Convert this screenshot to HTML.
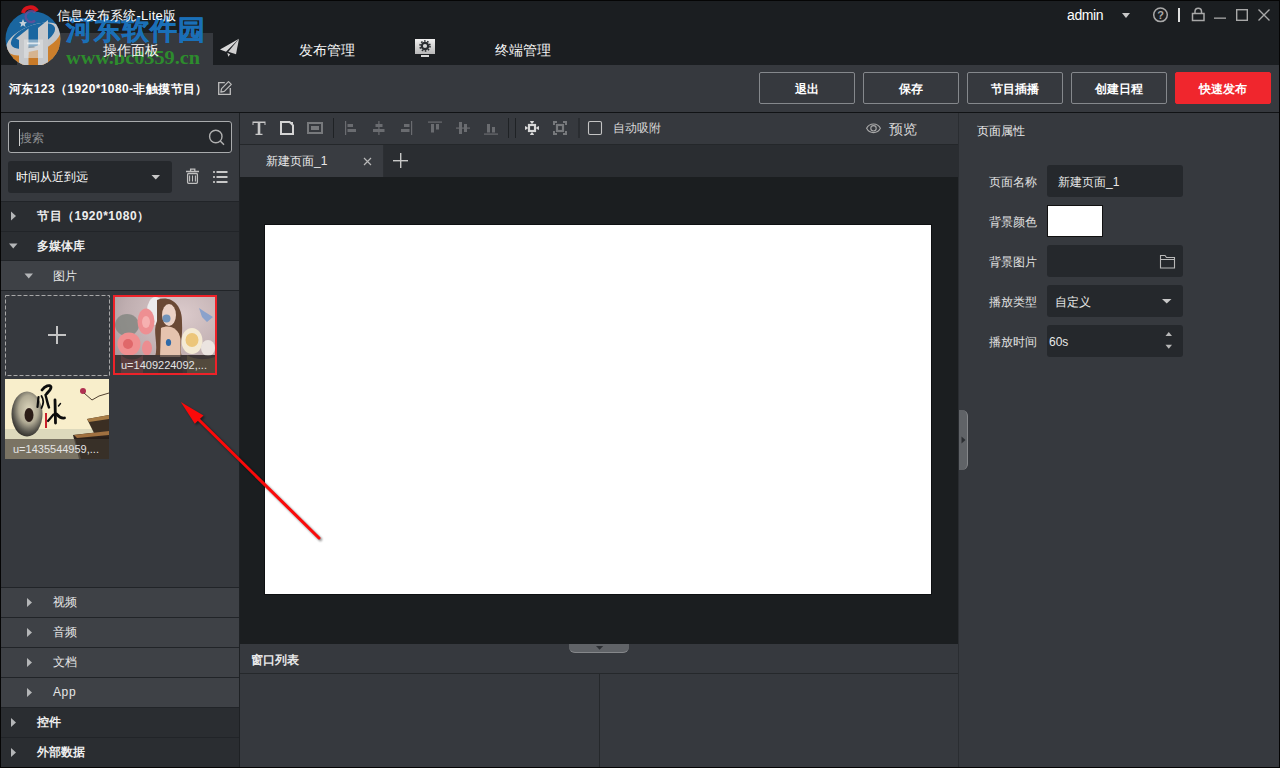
<!DOCTYPE html>
<html><head><meta charset="utf-8">
<style>
*{margin:0;padding:0;box-sizing:border-box;}
html,body{width:1280px;height:768px;overflow:hidden;background:#36393e;font-family:"Liberation Sans",sans-serif;color:#fff;}
.abs{position:absolute;}
#titlebar{position:absolute;left:0;top:0;width:1280px;height:65px;background:#1b1e21;}
#tab1{position:absolute;left:17px;top:33px;width:196px;height:32px;background:#36393e;}
.t{position:absolute;white-space:nowrap;line-height:1;}
#toolbar{position:absolute;left:0;top:65px;width:1280px;height:47px;background:#36393e;}
#line112{position:absolute;left:0;top:112px;width:1280px;height:1px;background:#111315;}
.btn{position:absolute;top:72px;width:96px;height:32px;border:1px solid #85888c;border-radius:2px;background:#36393e;font-size:12px;font-weight:bold;text-align:center;line-height:32px;color:#fff;}
#left{position:absolute;left:0;top:113px;width:240px;height:655px;background:#36393e;}
.row{position:absolute;left:1px;width:238px;height:29px;font-size:13px;}
.row.top{background:#2a2d31;font-weight:bold;}
.row.sub{background:#3e4146;}
.div{position:absolute;left:1px;width:238px;height:1px;background:#212428;}
#center{position:absolute;left:240px;top:113px;width:718px;height:655px;background:#1b1e20;}
#right{position:absolute;left:958px;top:113px;width:322px;height:655px;background:#36393e;}
</style></head><body>
<div id="titlebar">
  <div id="tab1"></div>
  <div class="t" style="left:299px;top:43px;font-size:14px;color:#f4f4f4;">发布管理</div>
  <div class="t" style="left:495px;top:43px;font-size:14px;color:#f4f4f4;">终端管理</div>
  <div class="t" style="left:1067px;top:8px;font-size:14px;letter-spacing:-0.4px;color:#fff;">admin</div>
  <svg class="abs" style="left:0;top:0" width="1280" height="65">
    <!-- operate panel icon (under logo) -->
    <rect x="25" y="41" width="17" height="16" fill="#cfcfcf" opacity="0.5"/>
    <!-- paper plane -->
    <path d="M220 49.5 L239 38.8 L226 51.8 Z" fill="#d8d8d8"/>
    <path d="M228.3 51.8 L239 38.8 L236 54.2 Z" fill="#cfcfcf"/>
    <path d="M227.3 52.8 L230.2 54.3 L228.3 56.8 Z" fill="#cfcfcf"/>
    <!-- terminal icon -->
    <defs><linearGradient id="mg" x1="0" y1="0" x2="0" y2="1"><stop offset="0" stop-color="#f0f0f0"/><stop offset="1" stop-color="#b8b8b8"/></linearGradient></defs><rect x="415" y="39" width="20" height="15" fill="url(#mg)"/>
    <rect x="421" y="55" width="8" height="2" fill="#d8d8d8"/>
    <circle cx="425" cy="46" r="3.2" fill="none" stroke="#2a2d30" stroke-width="2.2"/>
    <circle cx="425" cy="46" r="5" fill="none" stroke="#2a2d30" stroke-width="1.6" stroke-dasharray="1.6 1.54"/>
    <!-- admin dropdown -->
    <path d="M1122 13 L1130 13 L1126 18 Z" fill="#c8c8c8"/>
    <!-- help -->
    <circle cx="1160.5" cy="14.8" r="6.8" fill="none" stroke="#a8a8a8" stroke-width="1.5"/>
    <text x="1160.5" y="19" font-size="11" font-weight="bold" fill="#a8a8a8" text-anchor="middle" font-family="Liberation Sans">?</text>
    <rect x="1178" y="8" width="2" height="14" fill="#e0e0e0"/>
    <!-- lock -->
    <rect x="1192.5" y="13.5" width="11.5" height="7" fill="none" stroke="#a8a8a8" stroke-width="1.5"/>
    <path d="M1195 13.5 V11.5 A3.25 3.25 0 0 1 1201.5 11.5 V13.5" fill="none" stroke="#a8a8a8" stroke-width="1.5"/>
    <!-- min max close -->
    <rect x="1214" y="17.5" width="12" height="1.3" fill="#a8a8a8"/>
    <rect x="1236.7" y="9.7" width="10.6" height="10.6" fill="none" stroke="#a8a8a8" stroke-width="1.4"/>
    <path d="M1258.5 9.5 L1269.5 20.5 M1269.5 9.5 L1258.5 20.5" stroke="#a8a8a8" stroke-width="1.4"/>
  </svg>
  <!-- watermark logo -->
  <svg class="abs" style="left:0;top:0" width="220" height="70">
    <defs><clipPath id="lc"><circle cx="33" cy="39" r="27.5"/></clipPath></defs>
    <g clip-path="url(#lc)">
      <rect x="0" y="0" width="70" height="70" fill="#1a66a0"/>
      <path d="M0 44 C 15 54, 42 50, 70 26 L70 70 L0 70 Z" fill="#cc7f2c"/>
      <ellipse cx="33.5" cy="39" rx="29" ry="13.5" transform="rotate(-22 33.5 39)" fill="#c4c6c9"/>
      <ellipse cx="33" cy="36" rx="23.5" ry="10.5" transform="rotate(-22 33 36)" fill="#1a66a0"/>
      <path d="M0 56 C 20 62, 45 56, 70 40 L70 70 L0 70 Z" fill="#cc7f2c"/>
      <path d="M28.5 52 L38 50 L38 70 L28.5 70 Z" fill="#c87a28"/>
      <path d="M16 38.5 L28.5 28.5 V70 H19 V40 Z" fill="#c6c8cb"/>
      <path d="M38 28 L48 20 V70 H38 Z" fill="#c6c8cb"/>
      <rect x="24" y="39.5" width="19" height="18.5" fill="#e2e4e6" opacity="0.55"/>
      <rect x="27" y="42.5" width="13" height="1.8" fill="#f4f6f8" opacity="0.8"/>
      <rect x="28.5" y="46.5" width="6" height="1.5" fill="#909498" opacity="0.6"/>
    </g>
    <path d="M23 13 A7.5 7 0 0 1 37 11" fill="none" stroke="#d8141c" stroke-width="4"/>
    <path d="M35 12.5 A5.5 5.5 0 1 0 35 20.5" fill="none" stroke="#6a4c98" stroke-width="2.5" opacity="0.8"/>
    <path d="M23 19 L24.2 22 L27 22.3 L24.8 24 L25.5 27 L23 25.3 L20.5 27 L21.2 24 L19 22.3 L21.8 22 Z" fill="#d8dce0" opacity="0.9"/>
    <text x="66" y="63.5" font-family="Liberation Serif" font-size="19.5" font-weight="bold" fill="#2d8c2d" textLength="134" lengthAdjust="spacingAndGlyphs">www.pc0359.cn</text>
  </svg>
  <div class="t" style="left:66px;top:17px;font-size:26.5px;font-weight:bold;color:#1a6fb5;letter-spacing:1px;-webkit-text-stroke:0.5px #1a70b8;">河东软件园</div>
  <div class="t" style="left:57px;top:9px;font-size:13px;letter-spacing:0.25px;color:#fff;">信息发布系统-Lite版</div>
  <div class="t" style="left:103px;top:43px;font-size:14px;color:#f4f4f4;">操作面板</div>
</div>
<div id="toolbar">
  <svg class="abs" style="left:0;top:0" width="300" height="47" viewBox="0 65 300 47">
    <path d="M224.8 82.7 H218.7 V94.3 H230.3 V88" fill="none" stroke="#bdbdbd" stroke-width="1.3"/>
    <path d="M228.5 81.6 L231.3 84.4 L224.3 91.4 L220.8 92.2 L221.6 88.7 Z" fill="none" stroke="#bdbdbd" stroke-width="1.2" stroke-linejoin="round"/>
  </svg>
  <div class="t" style="left:9px;top:18px;font-size:12px;font-weight:bold;letter-spacing:0.4px;">河东123（1920*1080-非触摸节目）</div>
</div>
<div id="line112"></div>
<div class="btn" style="left:759px;">退出</div>
<div class="btn" style="left:863px;">保存</div>
<div class="btn" style="left:967px;">节目插播</div>
<div class="btn" style="left:1071px;">创建日程</div>
<div class="btn" style="left:1175px;background:#f0262d;border-color:#f0262d;">快速发布</div>

<div id="left">
  <!-- search -->
  <div class="abs" style="left:8px;top:8px;width:224px;height:32px;border:1.5px solid #a9abad;border-radius:3px;background:#25282c;"></div>
  <div class="abs" style="left:19px;top:16px;width:1px;height:17px;background:#d0d0d0;"></div>
  <div class="t" style="left:20px;top:19px;font-size:12px;color:#8c8e91;">搜索</div>
  <svg class="abs" style="left:0;top:0" width="240" height="80">
    <circle cx="215.8" cy="23.5" r="6.2" fill="none" stroke="#b0b0b0" stroke-width="1.4"/>
    <path d="M220.3 28 L224 31.7" stroke="#b0b0b0" stroke-width="1.5"/>
    <!-- trash -->
    <path d="M186 58.5 H199 M190.6 58.5 V56.2 H194.8 V58.5" fill="none" stroke="#c0c0c0" stroke-width="1.3"/>
    <rect x="187.6" y="60.5" width="9.8" height="9.85" rx="1" fill="none" stroke="#c0c0c0" stroke-width="1.3"/>
    <path d="M189.6 62.5 V68.5 M192.5 62.5 V68.5 M195.4 62.5 V68.5" stroke="#c0c0c0" stroke-width="1.1"/>
    <!-- list -->
    <rect x="213" y="58" width="2" height="2" fill="#b0b0b0"/>
    <rect x="213" y="63" width="2" height="2" fill="#b0b0b0"/>
    <rect x="213" y="68" width="2" height="2" fill="#b0b0b0"/>
    <rect x="216.5" y="58" width="11" height="2" fill="#c8c8c8"/>
    <rect x="216.5" y="63" width="11" height="2" fill="#c8c8c8"/>
    <rect x="216.5" y="68" width="11" height="2" fill="#c8c8c8"/>
  </svg>
  <!-- sort dropdown -->
  <div class="abs" style="left:8px;top:48px;width:164px;height:32px;border-radius:3px;background:#25282c;"></div>
  <div class="t" style="left:16px;top:58px;font-size:12px;color:#fff;">时间从近到远</div>
  <svg class="abs" style="left:0;top:0" width="240" height="655">
    <path d="M151.5 62 L160 62 L155.75 66.5 Z" fill="#c8c8c8"/>
  </svg>
  <!-- tree -->
  <div class="div" style="top:88px;"></div>
  <div class="row top" style="top:89px;"></div>
  <div class="div" style="top:118px;"></div>
  <div class="row top" style="top:119px;height:28px;"></div>
  <div class="div" style="top:147px;"></div>
  <div class="row sub" style="top:148px;"></div>
  <div class="div" style="top:177px;"></div>
  <div class="div" style="top:474px;"></div>
  <div class="row sub" style="top:475px;"></div>
  <div class="div" style="top:504px;"></div>
  <div class="row sub" style="top:505px;"></div>
  <div class="div" style="top:534px;"></div>
  <div class="row sub" style="top:535px;"></div>
  <div class="div" style="top:564px;"></div>
  <div class="row sub" style="top:565px;"></div>
  <div class="div" style="top:594px;"></div>
  <div class="row top" style="top:595px;"></div>
  <div class="div" style="top:624px;"></div>
  <div class="row top" style="top:625px;"></div>
  <div class="t" style="left:37px;top:97px;font-size:12px;font-weight:bold;letter-spacing:0.5px;color:#eee;">节目（1920*1080）</div>
  <div class="t" style="left:37px;top:127px;font-size:12px;font-weight:bold;color:#eee;">多媒体库</div>
  <div class="t" style="left:53px;top:157px;font-size:12px;color:#e6e6e6;">图片</div>
  <div class="t" style="left:53px;top:483px;font-size:12px;color:#e6e6e6;">视频</div>
  <div class="t" style="left:53px;top:513px;font-size:12px;color:#e6e6e6;">音频</div>
  <div class="t" style="left:53px;top:543px;font-size:12px;color:#e6e6e6;">文档</div>
  <div class="t" style="left:53px;top:573px;font-size:12px;letter-spacing:0.6px;color:#e6e6e6;">App</div>
  <div class="t" style="left:37px;top:603px;font-size:12px;font-weight:bold;color:#eee;">控件</div>
  <div class="t" style="left:37px;top:633px;font-size:12px;font-weight:bold;color:#eee;">外部数据</div>
  <div class="abs" style="left:0;top:0;width:1px;height:655px;background:#101214;"></div>
  <div class="abs" style="left:239px;top:0;width:1px;height:655px;background:#1e2124;"></div>
  <svg class="abs" style="left:0;top:0" width="240" height="655">
    <g fill="#b4b6b8">
      <path d="M11 98.5 L16 103 L11 107.5 Z"/>
      <path d="M9 130.5 L17.5 130.5 L13.25 135.5 Z"/>
      <path d="M24.5 160.5 L33 160.5 L28.75 165.5 Z"/>
      <path d="M27 485 L32 489.5 L27 494 Z"/>
      <path d="M27 515 L32 519.5 L27 524 Z"/>
      <path d="M27 545 L32 549.5 L27 554 Z"/>
      <path d="M27 575 L32 579.5 L27 584 Z"/>
      <path d="M11 605 L16 609.5 L11 614 Z"/>
      <path d="M11 635 L16 639.5 L11 644 Z"/>
    </g>
    <!-- add box -->
    <rect x="5.5" y="182.5" width="104" height="80" fill="none" stroke="#a8a8a8" stroke-width="1" stroke-dasharray="4 2"/>
    <rect x="48" y="221" width="18" height="2" fill="#c4c4c4"/>
    <rect x="56" y="213" width="2" height="18" fill="#c4c4c4"/>
  </svg>
  <!-- image 1 -->
  <svg class="abs" style="left:113px;top:182px" width="104" height="80" viewBox="0 0 104 80">
    <defs>
      <radialGradient id="g1bg" cx="0.65" cy="0.25" r="0.9"><stop offset="0" stop-color="#dccbcc"/><stop offset="0.6" stop-color="#bfaeb0"/><stop offset="1" stop-color="#9d8f92"/></radialGradient>
      <clipPath id="c1"><rect x="2" y="2" width="100" height="76"/></clipPath>
      <filter id="bl1"><feGaussianBlur stdDeviation="0.6"/></filter>
    </defs>
    <g clip-path="url(#c1)">
      <rect x="0" y="0" width="104" height="80" fill="url(#g1bg)"/>
      <g filter="url(#bl1)">
        <ellipse cx="14" cy="30" rx="12" ry="11" fill="#7f857e" opacity="0.8"/>
        <ellipse cx="42.5" cy="16" rx="8.5" ry="14" fill="#ecebec"/>
        <ellipse cx="33" cy="26.5" rx="8.5" ry="13" fill="#ee8f92"/>
        <ellipse cx="33" cy="27" rx="4" ry="6" fill="#f6b0b0"/>
        <ellipse cx="16" cy="49" rx="11.5" ry="11.5" fill="#f08f90"/>
        <ellipse cx="15" cy="49" rx="5" ry="5" fill="#e0676a"/>
        <ellipse cx="34" cy="53" rx="5" ry="7.5" fill="#ec8d90"/>
        <path d="M44 5 C56 0 70 8 69 28 C70 42 66 54 69 62 L42 62 C46 50 39 36 44 26 Z" fill="#6a4834"/><rect x="0" y="60" width="104" height="20" fill="#6a6060"/><path d="M8 60 C14 66 24 66 30 60 L30 80 L8 80 Z" fill="#b87074"/><path d="M47 60 L68 60 L70 80 L45 80 Z" fill="#5a5050"/><path d="M74 60 C80 64 90 66 102 62 L102 80 L74 80 Z" fill="#a09070"/>
        <ellipse cx="56" cy="20" rx="7" ry="11" fill="#ebd2c6"/>
        <ellipse cx="53.5" cy="23.5" rx="4" ry="4" fill="#5a8ab8" opacity="0.85"/>
        <path d="M48 33 C56 29 66 33 67.5 44 L67.5 62 L47 62 Z" fill="#e5c3ae"/>
        <ellipse cx="55.5" cy="47.5" rx="2.6" ry="3.5" fill="#2e6aa8"/>
        <ellipse cx="79" cy="46" rx="10.5" ry="13" fill="#f4ead4"/>
        <ellipse cx="79" cy="45" rx="6.5" ry="7" fill="#ecc67a"/>
        <ellipse cx="95" cy="53" rx="7" ry="8" fill="#ebe4e0"/>
        <path d="M86 13 L92 17 L100 22 L94 27 L89 22 Z" fill="#8aa2cc"/>
      </g>
      <rect x="0" y="60" width="104" height="20" fill="#231f1f" opacity="0.62"/>
    </g>
    <rect x="1" y="1" width="102" height="78" fill="none" stroke="#ee2229" stroke-width="2"/>
  </svg>
  <div class="t" style="left:121px;top:247px;font-size:11px;color:#e4e4e4;">u=1409224092,...</div>
  <!-- image 2 -->
  <svg class="abs" style="left:5px;top:266px" width="104" height="80" viewBox="0 0 104 80">
    <defs>
      <radialGradient id="g2c" cx="0.55" cy="0.4" r="0.62"><stop offset="0" stop-color="#ddd6bc"/><stop offset="0.5" stop-color="#b0aa94"/><stop offset="0.8" stop-color="#5a5850"/><stop offset="1" stop-color="#2e2c28"/></radialGradient>
      <filter id="bl2"><feGaussianBlur stdDeviation="0.7"/></filter>
    </defs>
    <rect x="0" y="0" width="104" height="80" fill="#f8eecb"/>
    <g filter="url(#bl2)">
      <rect x="0" y="50" width="104" height="10" fill="#ddd9bc"/>
      <ellipse cx="22" cy="35" rx="15.5" ry="22.5" fill="url(#g2c)"/>
      <ellipse cx="24" cy="36" rx="4.5" ry="7" fill="#2a1a18"/>
      <path d="M68 56 L104 52 L104 80 L74 80 Z" fill="#2e241c"/>
      <path d="M82 40 L104 36 L104 56 L90 56 Z" fill="#3a2e24"/>
      <path d="M82 40 L104 36 L104 40 L84 43 Z" fill="#a87c44"/>
      <path d="M69 56 L104 52 L104 56 L72 59 Z" fill="#a07040"/>
    </g>
    <g fill="none" stroke="#0c0c0c" stroke-linecap="round" stroke-linejoin="round">
      <path d="M37 11 C40 7 45 5 46 8 C46 11 43 13 41.5 15" stroke-width="2.8"/>
      <path d="M33.5 18 L32.5 28" stroke-width="2.2"/>
      <path d="M36.5 17 C38.5 20 38.5 25 36.5 29" stroke-width="1.8"/>
      <path d="M40.5 16 C42 21 42.5 25 44 28.5" stroke-width="2.4"/>
      <path d="M50 21 L50.5 44" stroke-width="2.8"/>
      <path d="M43 42 L48.5 35.5" stroke-width="2.2"/>
      <path d="M51.5 35 C54 38 57 39.5 59.5 39" stroke-width="2.8"/>
      <path d="M53.5 27 L55.5 24.5" stroke-width="1.4"/>
    </g>
    <rect x="40" y="34" width="2" height="15" fill="#c8202c"/>
    <circle cx="78" cy="12" r="3" fill="#b03050"/>
    <path d="M79 14 L87 21 L94 17 L104 14" fill="none" stroke="#504030" stroke-width="1"/>
    <rect x="0" y="60" width="104" height="20" fill="#5a5448" opacity="0.8"/>
    <path d="M70 60 L104 58 L104 80 L76 80 Z" fill="#241c16" opacity="0.55"/>
  </svg>
  <div class="t" style="left:13px;top:331px;font-size:11px;color:#e4e4e4;">u=1435544959,...</div>
</div>
<div id="center">
  <!-- toolbar -->
  <div class="abs" style="left:0;top:0;width:718px;height:31px;background:#36393e;"></div>
  <div class="abs" style="left:0;top:31px;width:718px;height:1px;background:#24272a;"></div>
  <div class="abs" style="left:0;top:32px;width:718px;height:32px;background:#2a2d31;"></div>
  <div class="abs" style="left:0;top:32px;width:143px;height:32px;background:#393c41;"></div>
  <div class="t" style="left:26px;top:42px;font-size:12px;color:#e8e8e8;">新建页面_1</div>
  <div class="t" style="left:649px;top:9px;font-size:14px;color:#d6d6d6;">预览</div>
  <div class="t" style="left:373px;top:9px;font-size:12px;color:#d6d6d6;">自动吸附</div>
  <svg class="abs" style="left:0;top:0" width="718" height="64" viewBox="240 113 718 64">
    <!-- T -->
    <path d="M252.5 121.5 H265.5 V125 H264.5 V123 H260.3 V133.8 H262.5 V135 H255.5 V133.8 H257.7 V123 H253.5 V125 H252.5 Z" fill="#c8c8c8"/>
    <!-- page -->
    <path d="M281 122 H289.6 L293 125.4 V134 H281 Z" fill="none" stroke="#d4d4d4" stroke-width="2" stroke-linejoin="miter"/>
    <path d="M289.2 122 L293 125.8 L293 122 Z" fill="#d4d4d4"/>
    <!-- rect -->
    <rect x="308" y="123" width="14" height="10" fill="none" stroke="#77797c" stroke-width="2"/>
    <rect x="311" y="126" width="8" height="4" fill="#77797c"/>
    <rect x="333" y="118" width="1" height="20" fill="#1f2225"/>
    <!-- align left -->
    <g fill="#6a6c70">
      <rect x="345" y="121" width="1.2" height="14"/>
      <rect x="347.5" y="124" width="5.5" height="3"/>
      <rect x="347.5" y="129" width="8.5" height="3"/>
      <!-- align center -->
      <rect x="378.3" y="121" width="1.2" height="14"/>
      <rect x="375.5" y="124" width="7" height="3"/>
      <rect x="373" y="129" width="11.5" height="3"/>
      <!-- align right -->
      <rect x="411" y="121" width="1.2" height="14"/>
      <rect x="404" y="124" width="5.5" height="3"/>
      <rect x="401" y="129" width="8.5" height="3"/>
      <!-- align top -->
      <rect x="428" y="121.5" width="14" height="1.2"/>
      <rect x="431" y="124" width="3" height="8.5"/>
      <rect x="436" y="124" width="3" height="5.5"/>
      <!-- align middle -->
      <rect x="456" y="127.5" width="14" height="1.2"/>
      <rect x="459" y="122" width="3" height="12"/>
      <rect x="464" y="124" width="3" height="8"/>
      <!-- align bottom -->
      <rect x="484" y="133.5" width="14" height="1.2"/>
      <rect x="487" y="124" width="3" height="8.5"/>
      <rect x="492" y="127" width="3" height="5.5"/>
    </g>
    <rect x="508" y="118" width="1" height="20" fill="#1f2225"/>
    <rect x="515" y="118" width="1" height="20" fill="#1f2225"/>
    <!-- move icon -->
    <g fill="#d8d8d8">
      <rect x="529" y="125" width="6" height="6" fill="none" stroke="#d8d8d8" stroke-width="2.2"/>
      <path d="M529.9 121 H534.1 L532.7 123.6 H531.3 Z"/>
      <path d="M529.9 135 H534.1 L532.7 132.4 H531.3 Z"/>
      <path d="M525 125.9 V130.1 L527.6 128.7 V127.3 Z"/>
      <path d="M539 125.9 V130.1 L536.4 128.7 V127.3 Z"/>
    </g>
    <!-- fit icon -->
    <g fill="none" stroke="#77797c" stroke-width="2">
      <path d="M554 125 V122 H557 M563 122 H566 V125 M566 131 V134 H563 M557 134 H554 V131"/>
    </g>
    <rect x="557" y="125" width="6" height="6" fill="none" stroke="#77797c" stroke-width="2.2"/>
    <rect x="578.5" y="118" width="1" height="20" fill="#1f2225"/>
    <!-- checkbox -->
    <rect x="588.5" y="121.5" width="13" height="13" rx="1.5" fill="none" stroke="#c4c4c4" stroke-width="1.1"/>
    <!-- eye -->
    <path d="M866.6 128.3 C869.5 122.6 877.5 122.6 880.4 128.3 C877.5 134 869.5 134 866.6 128.3 Z" fill="none" stroke="#a8a8a8" stroke-width="1.1"/>
    <circle cx="873.5" cy="128.3" r="2.7" fill="none" stroke="#a8a8a8" stroke-width="1.1"/>
    <!-- tab close -->
    <path d="M364 158 L371 165 M371 158 L364 165" stroke="#b8b8b8" stroke-width="1.2"/>
    <!-- plus -->
    <rect x="393" y="160" width="15" height="1.4" fill="#c8c8c8"/>
    <rect x="400" y="153" width="1.4" height="15" fill="#c8c8c8"/>
  </svg>
  <!-- canvas -->
  <div class="abs" style="left:24px;top:111px;width:668px;height:371px;background:#fff;border:1px solid #0e1012;"></div>
  <!-- bottom window list -->
  <div class="abs" style="left:0;top:531px;width:718px;height:124px;background:#36393e;"></div>
  <div class="abs" style="left:0;top:560px;width:718px;height:1px;background:#25282b;"></div>
  <div class="abs" style="left:359px;top:561px;width:1px;height:94px;background:#25282b;"></div>
  <div class="t" style="left:11px;top:541px;font-size:12px;font-weight:bold;color:#e8e8e8;">窗口列表</div>
  <div class="abs" style="left:329px;top:531px;width:60px;height:9px;background:#606367;border-radius:0 0 6px 6px;border-bottom:1px solid #85878a;"></div>
  <svg class="abs" style="left:356px;top:533px" width="8" height="5"><path d="M0 0 L7.2 0 L3.6 3.8 Z" fill="#2c2f33"/></svg>
  <div class="abs" style="left:143px;top:32px;width:1px;height:32px;background:#2c2f33;"></div>
</div>
<div id="right">
  <div class="abs" style="left:0;top:0;width:1px;height:655px;background:#2a2d31;"></div>
  <div class="t" style="left:19px;top:12px;font-size:12px;color:#e8e8e8;">页面属性</div>
  <div class="t" style="left:31px;top:63px;font-size:12px;color:#e0e0e0;">页面名称</div>
  <div class="t" style="left:31px;top:103px;font-size:12px;color:#e0e0e0;">背景颜色</div>
  <div class="t" style="left:31px;top:143px;font-size:12px;color:#e0e0e0;">背景图片</div>
  <div class="t" style="left:31px;top:183px;font-size:12px;color:#e0e0e0;">播放类型</div>
  <div class="t" style="left:31px;top:223px;font-size:12px;color:#e0e0e0;">播放时间</div>
  <div class="abs" style="left:89px;top:52px;width:136px;height:32px;background:#25282c;border-radius:3px;"></div>
  <div class="abs" style="left:89px;top:92px;width:56px;height:32px;background:#fff;border:1px solid #111;"></div>
  <div class="abs" style="left:89px;top:132px;width:136px;height:32px;background:#25282c;border-radius:3px;"></div>
  <div class="abs" style="left:89px;top:172px;width:136px;height:32px;background:#25282c;border-radius:3px;"></div>
  <div class="abs" style="left:89px;top:212px;width:136px;height:32px;background:#25282c;border-radius:3px;"></div>
  <div class="t" style="left:100px;top:63px;font-size:12px;color:#e8e8e8;">新建页面_1</div>
  <div class="t" style="left:97px;top:183px;font-size:12px;color:#e8e8e8;">自定义</div>
  <div class="t" style="left:91px;top:223px;font-size:12px;color:#e8e8e8;">60s</div>
  <svg class="abs" style="left:0;top:0" width="322" height="300" viewBox="958 113 322 300">
    <!-- folder -->
    <path d="M1160.5 255.5 H1165 L1166.5 257.5 H1174.5 V268 H1160.5 Z M1160.5 259.5 H1174.5" fill="none" stroke="#b8b8b8" stroke-width="1.1"/>
    <!-- dropdown -->
    <path d="M1162 299 L1171.5 299 L1166.75 303.5 Z" fill="#c8c8c8"/>
    <!-- spinner -->
    <path d="M1165.5 336 L1172 336 L1168.75 332 Z" fill="#b8b8b8"/>
    <path d="M1165.5 344.7 L1172 344.7 L1168.75 348.7 Z" fill="#b8b8b8"/>
  </svg>
  <div class="abs" style="left:1px;top:297px;width:9px;height:60px;background:#606367;border-radius:0 6px 6px 0;border-right:1px solid #85878a;"></div>
  <svg class="abs" style="left:3px;top:323px" width="6" height="8"><path d="M0.5 0.5 L4.5 4 L0.5 7.5 Z" fill="#2c2f33"/></svg>
</div>
<svg class="abs" style="left:0;top:0;z-index:90" width="1280" height="768">
  <defs><filter id="sh" x="-20%" y="-20%" width="140%" height="140%"><feGaussianBlur stdDeviation="1.2"/></filter></defs>
  <g opacity="0.45" filter="url(#sh)" transform="translate(1.5,1.5)">
    <path d="M193 414 L319 538" stroke="#000" stroke-width="3.2" stroke-linecap="round"/>
    <path d="M180.8 401.9 L203.5 415.5 L194.8 423.8 Z" fill="#000"/>
  </g>
  <path d="M194 415 L319 538" stroke="#fb0a0a" stroke-width="3" stroke-linecap="round"/>
  <path d="M180.8 401.9 L203.5 415.5 L194.8 423.8 Z" fill="#fb0a0a"/>
</svg>
<div class="abs" style="left:0;top:0;width:1280px;height:768px;border:1px solid #050505;z-index:100;"></div>
</body></html>
